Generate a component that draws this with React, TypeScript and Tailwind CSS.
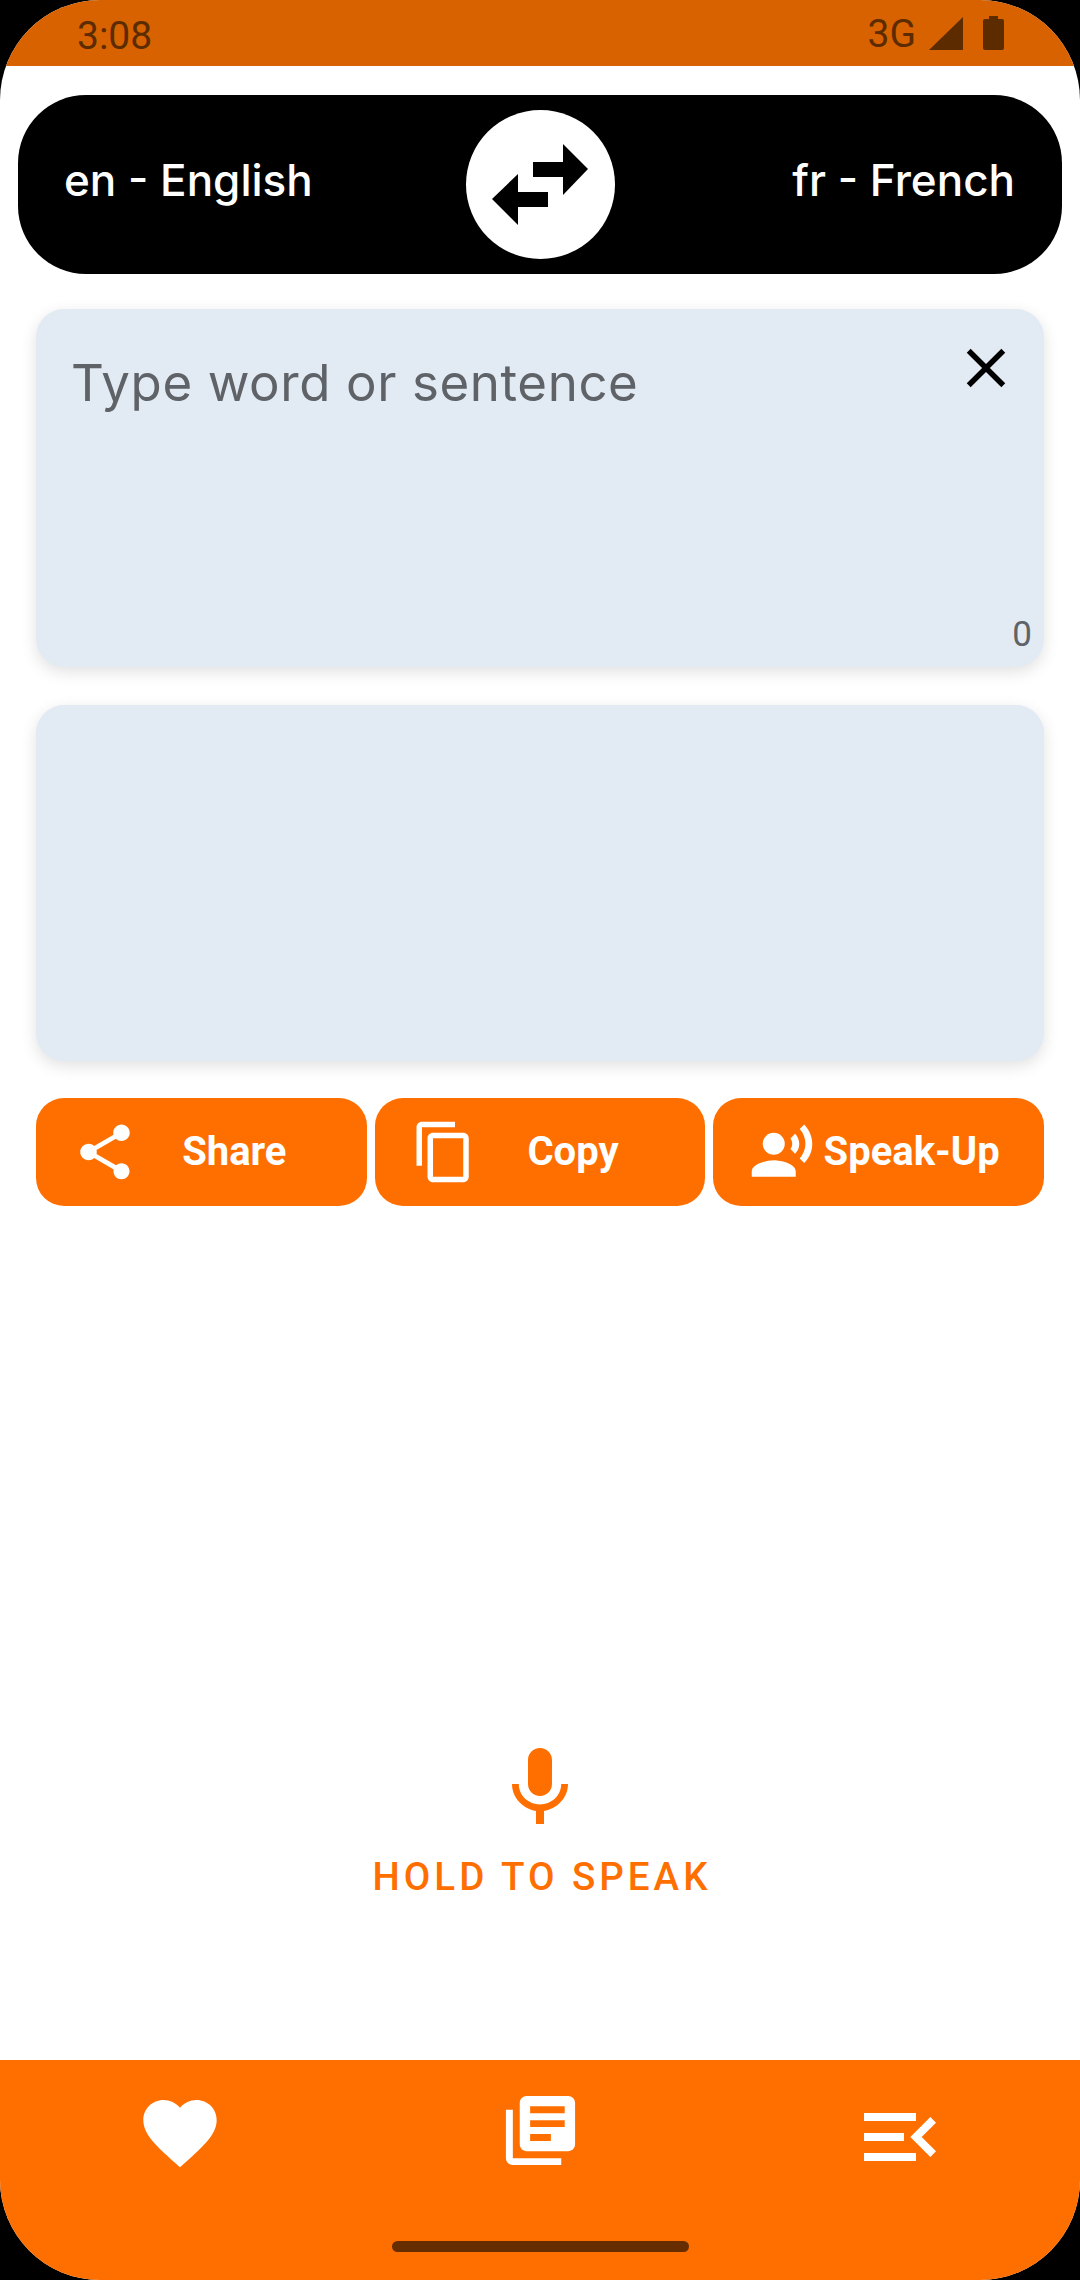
import { MdClose, MdContentCopy, MdFavorite, MdLibraryBooks, MdMenuOpen, MdMic, MdRecordVoiceOver, MdShare } from 'react-icons/md';
import type { IconType } from 'react-icons';

const actions: { label: string; icon: IconType }[] = [
  { label: 'Share', icon: MdShare },
  { label: 'Copy', icon: MdContentCopy },
  { label: 'Speak-Up', icon: MdRecordVoiceOver },
];

function StatusBar() {
  return (
    <div className="flex h-[66px] shrink-0 items-center justify-between bg-[#d96200] pl-[77px] pr-[76px] text-[#5c2c00]">
      <span className="mt-[7px] text-[39px] leading-none">3:08</span>
      <div className="flex items-center">
        <span className="mt-[2px] text-[39px] leading-none">3G</span>
        <svg viewBox="0 0 34 33" className="ml-[13px] h-[33px] w-[34px]" fill="currentColor">
          <polygon points="0,33 34,0 34,33" />
        </svg>
        <svg viewBox="0 0 21 34" className="ml-[20px] h-[34px] w-[21px]" fill="currentColor">
          <path d="M6 0h9v3h4a2 2 0 0 1 2 2v27a2 2 0 0 1-2 2H2a2 2 0 0 1-2-2V5a2 2 0 0 1 2-2h4z" />
        </svg>
      </div>
    </div>
  );
}

function LanguageBar() {
  return (
    <div className="mx-[18px] mt-[29px] grid h-[179px] shrink-0 grid-cols-[1fr_149px_1fr] items-center rounded-[68px] bg-black pl-[46px] pr-[45px] text-[44px] font-medium text-white [font-family:Inter,sans-serif]">
      <span className="-mt-[10px]">en - English</span>
      <div className="flex h-[149px] w-[149px] items-center justify-center rounded-full bg-white">
        <svg viewBox="0 0 149 149" className="h-[149px] w-[149px]" fill="black">
          <polygon points="122,59 97,34 97,85" />
          <rect x="67" y="52" width="30" height="15" />
          <polygon points="26,89 52,64 52,115" />
          <rect x="52" y="82" width="30" height="15" />
        </svg>
      </div>
      <span className="-mt-[10px] mr-[2px] text-right">fr - French</span>
    </div>
  );
}

function InputCard() {
  return (
    <div className="flex h-[358px] flex-col rounded-[28px] bg-[#e2eaf3] pb-[12px] pl-[35px] pr-[12px] pt-[26px] shadow-[0_5px_16px_rgba(0,0,0,0.12)]">
      <div className="flex items-start justify-between pr-[13px]">
        <span className="mt-[13px] text-[51px] leading-[70px] tracking-[0.6px] text-[#5f6368] [font-family:Inter,sans-serif]">Type word or sentence</span>
        <MdClose size={66} className="text-black" />
      </div>
      <span className="mt-auto text-right text-[35px] leading-[40px] text-[#5f6368]">0</span>
    </div>
  );
}

export default function App() {
  return (
    <div className="h-[2280px] w-[1080px] bg-black [font-family:Roboto,sans-serif]">
      <div className="flex h-full flex-col overflow-hidden rounded-[100px] bg-white">
        <StatusBar />
        <LanguageBar />

        <div className="mt-[35px] flex shrink-0 flex-col gap-[38px] px-9">
          <InputCard />
          <div className="h-[356px] rounded-[28px] bg-[#e2eaf3] shadow-[0_5px_16px_rgba(0,0,0,0.12)]" />
        </div>

        <div className="mt-[37px] grid h-[108px] shrink-0 grid-cols-3 gap-2 px-9">
          {actions.map(({ label, icon: Icon }) => (
            <button key={label} className="flex items-center rounded-[28px] bg-[#ff6f00] px-9 text-white">
              <Icon size={66} className="shrink-0" />
              <span className="flex-1 text-center text-[40px] font-bold leading-none">{label}</span>
            </button>
          ))}
        </div>

        <div className="flex flex-1 flex-col items-center justify-end pb-[161px] text-[#ff6f00]">
          <MdMic size={96} />
          <span className="mt-[18px] pl-[4px] text-[38.5px] font-medium leading-[45px] tracking-[4px]">HOLD TO SPEAK</span>
        </div>

        <div className="flex h-[220px] shrink-0 flex-col bg-[#ff6f00] pt-[29px]">
          <div className="grid h-[96px] grid-cols-3 items-start justify-items-center text-white">
            <MdFavorite size={88} />
            <MdLibraryBooks size={83} />
            <MdMenuOpen size={96} />
          </div>
          <div className="mt-[56px] h-[11px] w-[297px] self-center rounded-full bg-[#662d00]" />
        </div>
      </div>
    </div>
  );
}
